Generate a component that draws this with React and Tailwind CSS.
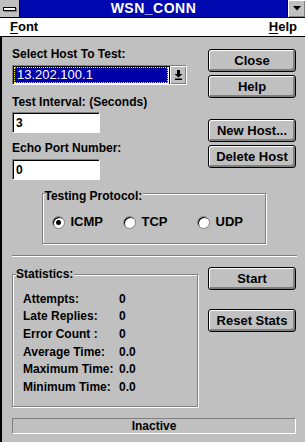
import React from 'react';

const btn =
  'h-[23px] w-[88px] flex items-center justify-center border border-black rounded-[3px] bg-[#c0c0c0] shadow-[inset_1px_1px_0_#fff,inset_-2px_-2px_0_#808080] text-[13px] font-bold text-black';

const sunken =
  'border-t border-l border-[#808080] border-r-white border-b-white border-r border-b shadow-[inset_1px_1px_0_#000]';

function Radio({ label, checked, width }) {
  return (
    <div className={`flex items-center ${width}`}>
      <span className="w-[13px] h-[13px] rounded-full bg-white border border-[#808080] shadow-[inset_1px_1px_0_#000] flex items-center justify-center">
        {checked && <span className="w-[5px] h-[5px] rounded-full bg-black" />}
      </span>
      <span className="ml-[6px] text-[13px] font-bold">{label}</span>
    </div>
  );
}

function Stat({ label, value }) {
  return (
    <div className="flex h-[17.6px] items-center">
      <span className="w-[96px]">{label}</span>
      <span>{value}</span>
    </div>
  );
}

export default function App() {
  return (
    <div className="w-[305px] h-[442px] bg-[#c0c0c0] font-['Liberation_Sans',Arial,sans-serif] text-black flex flex-col overflow-hidden">
      {/* Title bar */}
      <div className="flex h-[17px] shrink-0">
        <div className="w-[20px] h-full bg-[#c0c0c0] border-r border-black flex items-center justify-center">
          <span className="w-[13px] h-[4px] bg-white border border-black shadow-[1px_1px_0_#808080]" />
        </div>
        <div className="flex-1 bg-[#0008b0] flex items-center justify-center text-white font-bold text-[14px] tracking-[0.5px]">
          WSN_CONN
        </div>
        <div className="w-[18px] h-full bg-[#c0c0c0] border-l border-black shadow-[inset_1px_1px_0_#fff,inset_-1px_-1px_0_#808080] flex items-center justify-center">
          <svg width="8" height="5" viewBox="0 0 8 5">
            <path d="M0 0 H8 L4 4.5 Z" fill="#000" />
          </svg>
        </div>
      </div>
      <div className="h-[1px] bg-black shrink-0" />
      {/* Menu bar */}
      <div className="h-[18px] bg-white flex items-center justify-between px-[10px] pr-[8px] text-[13px] font-bold shrink-0">
        <span><span className="underline underline-offset-2">F</span>ont</span>
        <span><span className="underline underline-offset-2">H</span>elp</span>
      </div>
      <div className="h-[1px] bg-black shrink-0" />

      {/* Body */}
      <div className="flex-1 border-l-2 border-black pl-[10px] pr-[9px] flex flex-col text-[12px] font-bold">
        <div className="flex justify-between">
          <div className="w-[175px] pt-[10px]">
            <div className="leading-[14px]">Select Host To Test:</div>
            <div className={`mt-[4px] h-[20px] flex bg-white ${sunken}`}>
              <div className="flex-1 m-[1px] bg-[#0000a8] border border-dotted border-[#ffff00] flex items-center pl-[2px] text-white font-normal text-[13px]">
                13.202.100.1
              </div>
              <div className="w-[17px] bg-[#c0c0c0] border-l border-black shadow-[inset_1px_1px_0_#fff,inset_-1px_-1px_0_#808080] flex items-center justify-center">
                <svg width="9" height="10" viewBox="0 0 9 10">
                  <path d="M3 0 H6 V4 H8.5 L4.5 7.5 L0.5 4 H3 Z" fill="#000" />
                  <rect x="1" y="8.5" width="7" height="1.5" fill="#000" />
                </svg>
              </div>
            </div>
            <div className="mt-[10px] leading-[14px]">Test Interval: (Seconds)</div>
            <div className={`mt-[3px] w-[88px] h-[21px] bg-white flex items-center pl-[3px] ${sunken}`}>3</div>
            <div className="mt-[8px] leading-[14px]">Echo Port Number:</div>
            <div className={`mt-[4px] w-[88px] h-[21px] bg-white flex items-center pl-[3px] ${sunken}`}>0</div>
          </div>
          <div className="flex flex-col pt-[12px]">
            <div className={btn}>Close</div>
            <div className={`${btn} mt-[3px]`}>Help</div>
            <div className={`${btn} mt-[21px]`}>New Host...</div>
            <div className={`${btn} mt-[3px]`}>Delete Host</div>
          </div>
        </div>

        {/* Testing protocol group */}
        <div className="relative self-center ml-[-1px] mt-[13px] w-[224px] h-[51px] border border-[#808080] shadow-[1px_1px_0_#fff,inset_1px_1px_0_#fff] flex items-center pl-[9px] pt-[7px]">
          <span className="absolute left-[2px] top-[-4px] bg-[#c0c0c0] leading-[13px] pr-[1px]">Testing Protocol:</span>
          <Radio label="ICMP" checked width="w-[71px]" />
          <Radio label="TCP" width="w-[74px]" />
          <Radio label="UDP" />
        </div>

        {/* separator */}
        <div className="mt-[11px] h-[2px] border-t border-[#808080] border-b border-b-white mr-[-1px]" />

        <div className="flex justify-between">
          <div className="relative mt-[17px] w-[186px] h-[133px] border border-[#808080] shadow-[1px_1px_0_#fff,inset_1px_1px_0_#fff] pl-[10px] pt-[15px]">
            <span className="absolute left-[3px] top-[-8px] bg-[#c0c0c0] leading-[14px] pr-[1px]">Statistics:</span>
            <Stat label="Attempts:" value="0" />
            <Stat label="Late Replies:" value="0" />
            <Stat label="Error Count :" value="0" />
            <Stat label="Average Time:" value="0.0" />
            <Stat label="Maximum Time:" value="0.0" />
            <Stat label="Minimum Time:" value="0.0" />
          </div>
          <div className="flex flex-col pt-[10px]">
            <div className={btn}>Start</div>
            <div className={`${btn} mt-[19px]`}>Reset Stats</div>
          </div>
        </div>

        {/* status bar */}
        <div className="mt-[11px] h-[16px] border-t border-l border-[#808080] border-b border-r border-b-white border-r-white flex items-center justify-center">
          Inactive
        </div>
      </div>
    </div>
  );
}
